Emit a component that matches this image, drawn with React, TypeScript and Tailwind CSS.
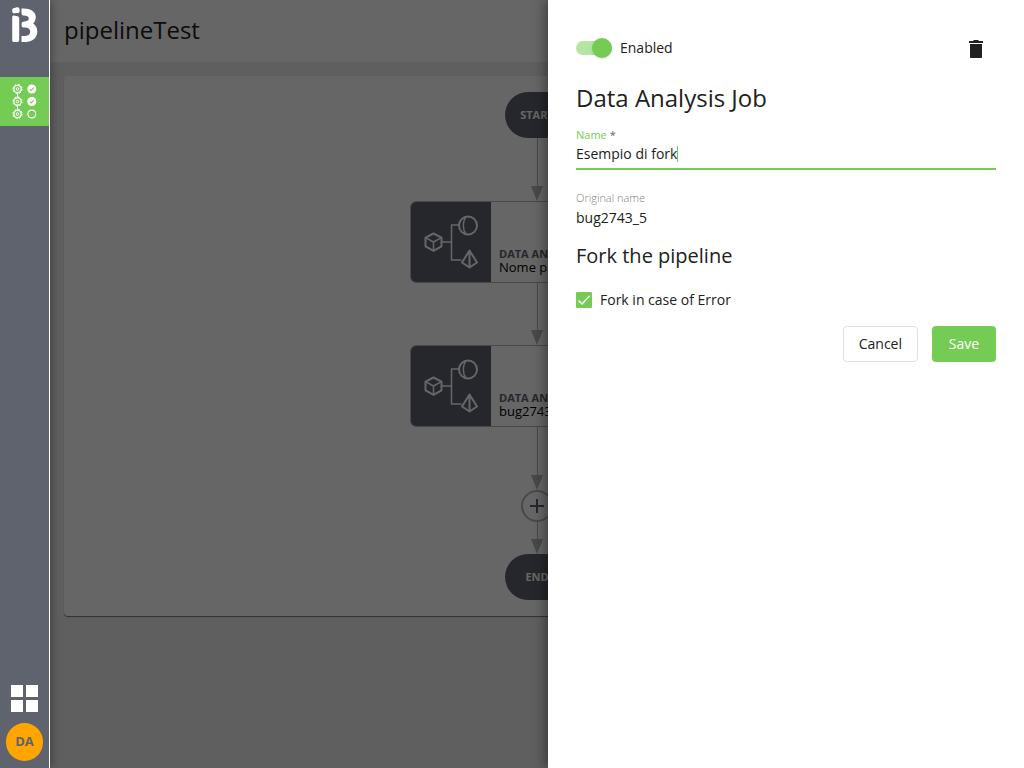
import { useState } from 'react';
import clsx from 'clsx';

const PipelineIcon = () => (
  <svg viewBox="0 0 26 38" className="h-[38px] w-[26px]" fill="none" stroke="#fff">
    <path d="M5.500 10v4M5.500 22.500v4" />
    {[6, 18.500, 31].map((y) => (
      <g key={y}>
        <circle cx="5.500" cy={y} r="3.700" strokeWidth="1.300" />
        <circle cx="5.500" cy={y} r="4.600" strokeWidth="1" strokeDasharray="1.800 1.813" />
        <circle cx="5.500" cy={y} r="1.300" strokeWidth="1" />
      </g>
    ))}
    {[6, 18.500].map((y) => (
      <g key={y}>
        <circle cx="19.800" cy={y} r="4.500" fill="#fff" stroke="none" />
        <path d={`M17.800 ${y + 0.2}l1.400 1.300 2.600-2.800`} stroke="#75cc54" strokeWidth="1.100" />
      </g>
    ))}
    <circle cx="19.800" cy="31" r="3.900" strokeWidth="1.200" />
  </svg>
);

const Logo = () => (
  <svg viewBox="0 0 26 36" className="h-9 w-[26px]" fill="#fff">
    <path d="M1.500 1.200L5 .2c1.600-.3 2.600.7 2.600 2.200v1.800c0 1.200-.8 1.800-1.900 1.800L2.200 6.300C1 6.300.2 5.700.2 4.500V3.100c0-.9.400-1.600 1.300-1.900z" />
    <path d="M.2 10.200c0-1.100.7-1.700 1.700-1.600l3.500.6c1.100.2 1.800.9 1.800 2v21.900c0 1.300-.7 2-2 2H2c-1.200 0-1.800-.6-1.800-1.800z" />
    <path d="M9.500 1.600c7.500-.8 14.300 2.200 14.300 8.700 0 2.600-1 4.700-2.700 6.200 2.700 1.700 4.200 4.400 4.200 7.900 0 7-5.800 10.700-13.600 10.700H9.500v-6.200h2.700c3.700 0 6-1.400 6-4.200s-2.300-4.300-5.800-4.300h-.7c-1.300 0-2.100-.6-2.100-1.900v-2c0-1.100.7-1.700 1.800-1.800 3.700-.3 5.400-1.400 5.400-3.200 0-2-2-3-5.100-3-1.300 0-2.200-.7-2.200-2z" />
  </svg>
);

const JobIcon = () => (
  <svg viewBox="0 0 56 56" className="size-14" fill="none" stroke="#fff" strokeWidth="2" strokeLinejoin="round">
    <path d="M10.500 19.500l8 4.200v8.600l-8 4.500-8-4.500v-8.600z" />
    <path d="M2.500 23.700l8 4.300 8-4.300M10.500 28v8.500" strokeWidth="1.500" />
    <path d="M18.500 28h10M36 11h-7.500v35h10" strokeWidth="1.500" />
    <circle cx="45" cy="11.500" r="9" />
    <path d="M43 2.800c-3.500 4.500-3.500 13 0 17.400" strokeWidth="1.400" />
    <path d="M46.500 36.500l7.500 12-7.500 5-7.500-5zM46.500 36.500v17" />
  </svg>
);

type ConnectorProps = {
  className: string;
};
const Connector = ({ className }: ConnectorProps) => (
  <div className={clsx('flex flex-col items-center', className)}>
    <span className="w-px grow bg-[#b4b6ba]" />
    <svg viewBox="0 0 12 15" className="h-[15px] w-3 fill-[#b4b6ba]">
      <path d="M0 0h12L6 15z" />
    </svg>
  </div>
);

type TerminalProps = {
  label: string;
};
const Terminal = ({ label }: TerminalProps) => (
  <div className="flex h-[46px] w-16 items-center justify-center rounded-full bg-[#5f636e] text-[11px] font-bold text-white">
    {label}
  </div>
);

type JobNodeProps = {
  type: string;
  name: string;
};
const JobNode = ({ type, name }: JobNodeProps) => (
  <div className="flex h-[82px] w-[254px] overflow-hidden rounded-md border border-[#b4b6ba] bg-white">
    <div className="flex w-20 shrink-0 items-center justify-center bg-[#5f636e]">
      <JobIcon />
    </div>
    <div className="flex flex-col justify-end px-2 pb-2">
      <span className="text-[11px] leading-3 font-bold text-[#5f636e]">{type}</span>
      <span className="text-[13px] leading-[14px] text-black">{name}</span>
    </div>
  </div>
);

const Sidebar = () => (
  <nav className="z-10 flex w-[50px] shrink-0 flex-col items-center border-r border-white bg-[#5f636e] pt-[7px] pb-[7px] shadow-[2px_0_8px_rgba(0,0,0,0.3)]">
    <a href="#home" aria-label="Home">
      <Logo />
    </a>
    <a
      href="#pipelines"
      aria-label="Pipelines"
      className="mt-[34px] flex h-[49px] w-full items-center justify-center bg-[#75cc54]"
    >
      <PipelineIcon />
    </a>
    <button type="button" aria-label="Apps" className="mt-auto grid grid-cols-2 gap-[3px]">
      <span className="size-3 bg-white" />
      <span className="size-3 bg-white" />
      <span className="size-3 bg-white" />
      <span className="size-3 bg-white" />
    </button>
    <button
      type="button"
      className="mt-[11px] h-[38px] w-[37px] rounded-full bg-[#ffa500] text-[13px] font-bold text-[#5f636e]"
    >
      DA
    </button>
  </nav>
);

const Pipeline = () => (
  <main className="flex grow flex-col bg-[#eee]">
    <header className="flex h-[62px] items-center bg-white px-[14px] pb-0.5">
      <h1 className="text-2xl text-[#212121]">pipelineTest</h1>
    </header>
    <section className="m-[14px] flex flex-col items-center rounded-sm bg-white py-4 shadow-[0_1px_1px_rgba(0,0,0,0.5)]">
      <Terminal label="START" />
      <Connector className="h-[63px]" />
      <JobNode type="DATA ANALYSIS" name="Nome prova" />
      <Connector className="h-[62px]" />
      <JobNode type="DATA ANALYSIS" name="bug2743_5" />
      <Connector className="h-[63px]" />
      <button
        type="button"
        aria-label="Add job"
        className="flex size-8 items-center justify-center rounded-full border-2 border-[#b4b6ba] bg-white"
      >
        <svg viewBox="0 0 14 14" className="size-[14px]" stroke="#5f636e" strokeWidth="2">
          <path d="M7 0v14M0 7h14" />
        </svg>
      </button>
      <Connector className="h-8" />
      <Terminal label="END" />
    </section>
  </main>
);

const JobDrawer = () => {
  const [enabled, setEnabled] = useState(true);
  const [fork, setFork] = useState(true);
  const [name, setName] = useState('Esempio di fork');

  return (
    <aside className="absolute inset-y-0 right-0 z-20 w-[476px] max-w-full bg-white px-7 pt-7 text-sm text-[#212121] shadow-[-3px_0_12px_rgba(0,0,0,0.4)]">
      <div className="flex h-10 items-center justify-between">
        <label className="flex items-center gap-2">
          <input
            type="checkbox"
            role="switch"
            checked={enabled}
            onChange={(e) => setEnabled(e.target.checked)}
            className="relative h-[14px] w-9 appearance-none rounded-full bg-gray-300 before:absolute before:-top-[3px] before:left-0 before:size-5 before:rounded-full before:bg-white before:shadow checked:bg-[#b5e5a4] checked:before:left-4 checked:before:bg-[#75cc54]"
          />
          Enabled
        </label>
        <button type="button" aria-label="Delete" className="flex size-10 items-center justify-center">
          <svg viewBox="0 0 24 24" className="size-6 fill-[#212121]">
            <path d="M6 8h12v13c0 .6-.4 1-1 1H7c-.6 0-1-.4-1-1zM5 5h4l1-1h4l1 1h4v2H5z" />
          </svg>
        </button>
      </div>
      <h2 className="mt-[14px] text-2xl leading-8">Data Analysis Job</h2>
      <div className="mt-3 flex flex-col items-start border-b-2 border-[#75cc54] pb-1">
        <label htmlFor="name" className="text-[11px] leading-[18px] text-[#75cc54]">
          Name <span className="text-[#5f636e]">*</span>
        </label>
        <input
          id="name"
          autoFocus
          value={name}
          onChange={(e) => setName(e.target.value)}
          className="my-0.5 field-sizing-content h-4 max-w-full border-r border-transparent text-sm caret-transparent outline-none focus:border-[#75cc54]"
        />
      </div>
      <dl className="mt-[19px]">
        <dt className="text-[11px] leading-[18px] font-light text-[#808080]">Original name</dt>
        <dd className="leading-[22px]">bug2743_5</dd>
      </dl>
      <h3 className="mt-[11px] text-xl leading-8 font-medium">Fork the pipeline</h3>
      <label className="mt-[18px] flex h-5 items-center gap-2">
        <span className="relative size-4">
          <input
            type="checkbox"
            checked={fork}
            onChange={(e) => setFork(e.target.checked)}
            className="block size-4 appearance-none rounded-[1px] border border-[#75cc54] checked:bg-[#75cc54]"
          />
          <svg
            viewBox="0 0 16 16"
            className="pointer-events-none absolute inset-0 size-4"
            fill="none"
            stroke="#fff"
            strokeWidth="1.500"
          >
            <path d="M2.500 8.500l3.500 3.500 7.500-8" />
          </svg>
        </span>
        Fork in case of Error
      </label>
      <div className="mt-4 flex justify-end gap-[14px]">
        <button type="button" className="h-9 rounded border border-[#e0e0e0] px-[15px]">
          Cancel
        </button>
        <button type="button" className="h-9 min-w-16 rounded bg-[#75cc54] px-4 font-medium text-white">
          Save
        </button>
      </div>
    </aside>
  );
};

export default function App() {
  return (
    <div className="relative flex min-h-screen overflow-hidden font-['Open_Sans',sans-serif]">
      <Sidebar />
      <div className="relative flex grow">
        <Pipeline />
        <div className="absolute inset-0 bg-black/60" />
      </div>
      <JobDrawer />
    </div>
  );
}
